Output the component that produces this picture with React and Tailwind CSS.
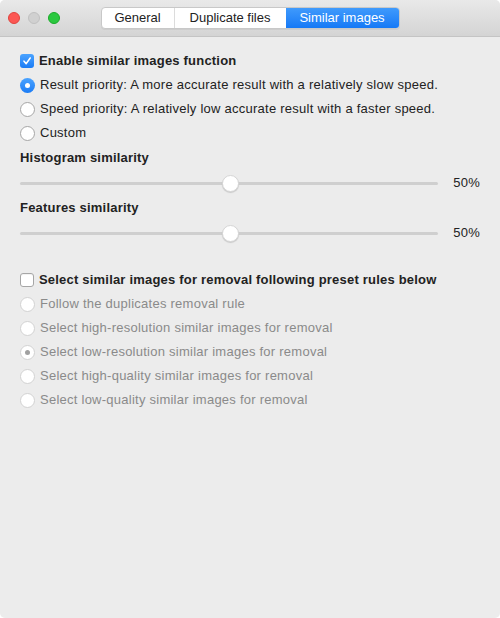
function Check({ checked }) {
  return checked ? (
    <span className="flex h-[14px] w-[14px] shrink-0 items-center justify-center rounded-[3px] bg-gradient-to-b from-[#4aa3ff] to-[#1a7cf5]">
      <svg width="10" height="10" viewBox="0 0 10 10">
        <path d="M2 5.2 L4.2 7.6 L8.2 2" fill="none" stroke="white" strokeWidth="1.6" strokeLinecap="round" strokeLinejoin="round" />
      </svg>
    </span>
  ) : (
    <span className="h-[14px] w-[14px] shrink-0 rounded-[3px] border border-[#a6a6a6] bg-white shadow-[inset_0_1px_0_rgba(0,0,0,0.05)]" />
  );
}

function Radio({ checked, disabled }) {
  if (checked && !disabled) {
    return (
      <span className="flex h-[15px] w-[15px] shrink-0 items-center justify-center rounded-full bg-gradient-to-b from-[#4aa3ff] to-[#1a7cf5]">
        <span className="h-[5px] w-[5px] rounded-full bg-white" />
      </span>
    );
  }
  return (
    <span
      className={`flex h-[15px] w-[15px] shrink-0 items-center justify-center rounded-full border bg-white ${
        disabled ? "border-[#d2d2d2] bg-[#f6f6f6]" : "border-[#a6a6a6]"
      }`}
    >
      {checked && <span className="h-[5px] w-[5px] rounded-full bg-[#a0a0a0]" />}
    </span>
  );
}

function Row({ children, control, bold, disabled }) {
  return (
    <div className="flex h-6 items-center gap-[5px]">
      {control}
      <span
        className={
          bold
            ? "font-bold tracking-[0.2px] text-[#222]"
            : disabled
            ? "tracking-[0.25px] text-[#8a8a8a]"
            : "tracking-[0.25px] text-[#222]"
        }
      >
        {children}
      </span>
    </div>
  );
}

function Slider({ label }) {
  return (
    <div>
      <div className="flex h-6 items-center font-bold tracking-[0.2px] text-[#222]">{label}</div>
      <div className="flex h-[26px] items-center">
        <div className="relative h-[3px] w-[418px] rounded-full bg-[#cfcfcf]">
          <span className="absolute left-[202px] top-[-7px] h-[17px] w-[17px] rounded-full border border-[#d6d6d6] bg-white shadow-[0_1px_1px_rgba(0,0,0,0.15)]" />
        </div>
        <span className="ml-auto tracking-[0.25px] text-[#222]">50%</span>
      </div>
    </div>
  );
}

export default function App() {
  return (
    <div
      className="flex h-[618px] w-[500px] flex-col overflow-hidden rounded-[5px] bg-[#ececec] text-[13px]"
      style={{ fontFamily: '"Liberation Sans", Arial, sans-serif' }}
    >
      <div className="relative flex h-[37px] shrink-0 items-center border-b border-[#c4c4c4] bg-gradient-to-b from-[#e9e9e9] to-[#d4d4d4]">
        <div className="absolute left-[8px] top-[12px] flex gap-[8px]">
          <span className="h-[12px] w-[12px] rounded-full border border-[#e0443e] bg-[#fc5753]" />
          <span className="h-[12px] w-[12px] rounded-full border border-[#c0c0c0] bg-[#d0d0d0]" />
          <span className="h-[12px] w-[12px] rounded-full border border-[#1aab29] bg-[#2bc840]" />
        </div>
        <div className="mx-auto mt-[-1px] flex h-[22px] overflow-hidden rounded-[4px] border border-[#c8c8c8] bg-white text-[#222] shadow-[0_1px_0_rgba(0,0,0,0.05)]">
          <span className="flex w-[73px] items-center justify-center border-r border-[#dcdcdc]">General</span>
          <span className="flex w-[111px] items-center justify-center">Duplicate files</span>
          <span className="flex w-[113px] items-center justify-center bg-gradient-to-b from-[#3f9afc] to-[#1479f6] text-white">
            Similar images
          </span>
        </div>
      </div>

      <div className="flex flex-col px-[20px] pt-[12px]">
        <Row control={<Check checked />} bold>
          Enable similar images function
        </Row>
        <Row control={<Radio checked />}>Result priority: A more accurate result with a relatively slow speed.</Row>
        <Row control={<Radio />}>Speed priority: A relatively low accurate result with a faster speed.</Row>
        <Row control={<Radio />}>Custom</Row>
        <div className="pt-px">
          <Slider label="Histogram similarity" />
          <Slider label="Features similarity" />
        </div>
        <div className="h-[22px]" />
        <Row control={<Check />} bold>
          Select similar images for removal following preset rules below
        </Row>
        <Row control={<Radio disabled />} disabled>
          Follow the duplicates removal rule
        </Row>
        <Row control={<Radio disabled />} disabled>
          Select high-resolution similar images for removal
        </Row>
        <Row control={<Radio disabled checked />} disabled>
          Select low-resolution similar images for removal
        </Row>
        <Row control={<Radio disabled />} disabled>
          Select high-quality similar images for removal
        </Row>
        <Row control={<Radio disabled />} disabled>
          Select low-quality similar images for removal
        </Row>
      </div>
    </div>
  );
}
